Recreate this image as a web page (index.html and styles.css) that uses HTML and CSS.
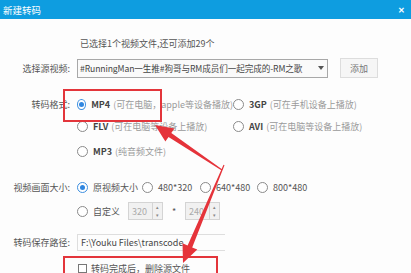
FILE: index.html
```html
<!DOCTYPE html>
<html>
<head>
<meta charset="utf-8">
<link rel="stylesheet" href="styles.css">
</head>
<body>
<div class="dialog">
  <div class="titlebar">
    <span class="title">新建转码</span>
    <span class="close">✕</span>
  </div>
  <div class="content">
    <div class="row info">已选择1个视频文件,还可添加29个</div>
    <div class="row source">
      <span class="label">选择源视频:</span>
      <div class="select"><span class="select-text">#RunningMan一生推#狗哥与RM成员们一起完成的-RM之歌</span><span class="caret"></span></div>
      <div class="btn">添加</div>
    </div>
    <div class="row fmt1">
      <span class="label">转码格式:</span>
      <span class="opt col1"><span class="radio on"></span><b>MP4</b><span class="hint">(可在电脑，apple等设备播放)</span></span>
      <span class="opt"><span class="radio"></span><b>3GP</b><span class="hint">(可在手机设备上播放)</span></span>
    </div>
    <div class="row fmt2">
      <span class="label"></span>
      <span class="opt col1"><span class="radio"></span><b>FLV</b><span class="hint">(可在电脑等设备上播放)</span></span>
      <span class="opt"><span class="radio"></span><b>AVI</b><span class="hint">(可在电脑等设备上播放)</span></span>
    </div>
    <div class="row fmt3">
      <span class="label"></span>
      <span class="opt"><span class="radio"></span><b>MP3</b><span class="hint">(纯音频文件)</span></span>
    </div>
    <div class="row size">
      <span class="label">视频画面大小:</span>
      <span class="opt s1"><span class="radio on"></span><span class="txt">原视频大小</span></span>
      <span class="opt s2"><span class="radio"></span><span class="txt">480*320</span></span>
      <span class="opt s3"><span class="radio"></span><span class="txt">640*480</span></span>
      <span class="opt"><span class="radio"></span><span class="txt">800*480</span></span>
    </div>
    <div class="row custom">
      <span class="label"></span>
      <span class="opt c1"><span class="radio"></span><span class="txt">自定义</span></span>
      <div class="spin"><span class="spin-val">320</span><span class="spin-btns"><i>▴</i><i>▾</i></span></div>
      <span class="times">*</span>
      <div class="spin"><span class="spin-val">240</span><span class="spin-btns"><i>▴</i><i>▾</i></span></div>
    </div>
    <div class="row path">
      <span class="label">转码保存路径:</span>
      <div class="input">F:\Youku Files\transcode</div>
    </div>
    <div class="row del">
      <span class="label"></span>
      <span class="check"></span><span class="txt">转码完成后，删除源文件</span>
    </div>
  </div>
  <div class="hl hl1"></div>
  <div class="hl hl2"></div>
  <svg class="arrows" width="411" height="273" viewBox="0 0 411 273">
    <polygon points="155,125 174.4,128.4 171.3,132.9 222.3,169.6 221.7,170.4 168.5,137.1 165.4,141.6" fill="#e5333a"/>
    <polygon points="183,263 197.3,249.5 192.2,247.4 224.5,165.2 223.5,164.8 187.6,245.4 182.5,243.3" fill="#e5333a"/>
  </svg>
</div>
</body>
</html>
```
FILE: styles.css
```css
html, body {
  margin: 0;
  padding: 0;
}
body {
  width: 411px;
  height: 273px;
  overflow: hidden;
  background: #fff;
  font-family: "Noto Sans CJK SC", "Noto Sans", sans-serif;
  font-size: 9px;
  color: #444;
}
.dialog {
  position: relative;
  width: 411px;
  height: 273px;
  background: #fdfdfd;
}
.titlebar {
  height: 19px;
  background: #0e9de0;
  display: flex;
  align-items: center;
  justify-content: space-between;
  padding: 0 6px 0 3px;
  color: #fff;
}
.title {
  font-size: 9.5px;
}
.close {
  font-size: 8px;
  font-weight: bold;
}
.content {
  display: flex;
  flex-direction: column;
}
.row {
  display: flex;
  align-items: center;
  height: 20px;
  white-space: nowrap;
}
.label {
  width: 77px;
  flex: none;
  box-sizing: border-box;
  padding-right: 7px;
  text-align: right;
  color: #555;
}
.info {
  margin-top: 14px;
  padding-left: 80px;
  color: #555;
}
.source { margin-top: 5px; }
.select {
  width: 251px;
  height: 19px;
  box-sizing: border-box;
  border: 1px solid #a8a8a8;
  background: #fafafa;
  display: flex;
  align-items: center;
  padding: 0 3px 0 2px;
  color: #444;
}
.select-text {
  flex: 1;
  font-size: 8.6px;
  letter-spacing: -0.1px;
}
.caret {
  flex: none;
  width: 0;
  height: 0;
  border-left: 3.5px solid transparent;
  border-right: 3.5px solid transparent;
  border-top: 4px solid #555;
  margin-left: 2px;
}
.btn {
  margin-left: 12px;
  width: 38px;
  height: 20px;
  box-sizing: border-box;
  border: 1px solid #ddd;
  background: #f6f6f6;
  display: flex;
  align-items: center;
  justify-content: center;
  color: #777;
}
.fmt1 { margin-top: 16px; }
.fmt2 { margin-top: 2px; }
.fmt3 { margin-top: 5px; }
.size { margin-top: 16px; }
.custom { margin-top: 4px; }
.path { margin-top: 11px; }
.del { margin-top: 6px; }
.opt {
  display: flex;
  align-items: center;
  flex: none;
}
.col1 { width: 156px; }
.s1 { width: 65px; }
.s2 { width: 58px; }
.s3 { width: 57px; }
.c1 { width: 51px; }
.radio {
  width: 11px;
  height: 11px;
  box-sizing: border-box;
  border: 1px solid #8a8a8a;
  border-radius: 50%;
  background: #fff;
  margin-right: 5px;
  display: flex;
  align-items: center;
  justify-content: center;
}
.radio.on {
  border-color: #3d8fe0;
}
.radio.on::after {
  content: "";
  width: 5px;
  height: 5px;
  border-radius: 50%;
  background: #2f86e0;
}
.opt b {
  font-weight: 700;
  color: #444;
}
.hint {
  color: #9a9a9a;
  margin-left: 3px;
}
.txt {
  color: #555;
}
.spin {
  width: 35px;
  height: 18px;
  box-sizing: border-box;
  border: 1px solid #d4d4d4;
  background: #f1f1f1;
  display: flex;
  align-items: center;
}
.spin-val {
  flex: 1;
  color: #aaa;
  padding-left: 3px;
}
.spin-btns {
  width: 9px;
  height: 16px;
  border-left: 1px solid #d4d4d4;
  display: flex;
  flex-direction: column;
  font-size: 5px;
  line-height: 8px;
  text-align: center;
  color: #888;
}
.spin-btns i {
  font-style: normal;
  height: 8px;
}
.times {
  width: 22px;
  text-align: center;
  color: #555;
}
.input {
  width: 148px;
  height: 17px;
  box-sizing: border-box;
  border-top: 1px solid #dedede;
  border-bottom: 1px solid #dedede;
  border-left: 1px solid #dedede;
  display: flex;
  align-items: center;
  padding-left: 3px;
  color: #444;
}
.check {
  width: 9px;
  height: 9px;
  box-sizing: border-box;
  border: 1px solid #777;
  background: #fff;
  margin: 0 4px 0 1px;
}
.hl {
  position: absolute;
  border: 2px solid #e3353b;
  box-sizing: border-box;
}
.hl1 {
  left: 63px;
  top: 89px;
  width: 99px;
  height: 33px;
}
.hl2 {
  left: 63px;
  top: 256px;
  width: 155px;
  height: 30px;
}
.arrows {
  position: absolute;
  left: 0;
  top: 0;
}
```
